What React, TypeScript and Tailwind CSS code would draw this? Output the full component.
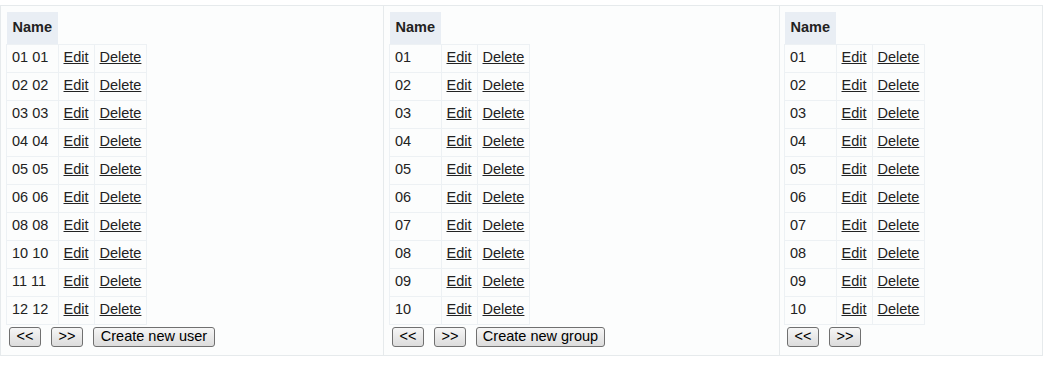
const users = ["01 01", "02 02", "03 03", "04 04", "05 05", "06 06", "08 08", "10 10", "11 11", "12 12"];
const groups = ["01", "02", "03", "04", "05", "06", "07", "08", "09", "10"];

const Btn = ({ label, w }: { label: string; w: string }) => (
  <button
    className={`${w} h-[20px] rounded-[3px] border border-[#707070] bg-gradient-to-b from-[#f6f6f6] to-[#dcdcdc] text-[14.5px] leading-none text-black`}
  >
    {label}
  </button>
);

const Listing = ({
  rows,
  create,
  createW,
}: {
  rows: string[];
  create?: string;
  createW?: string;
}) => (
  <div className="flex flex-col items-start">
    <table className="border-collapse">
      <thead>
        <tr>
          <th className="h-[32px] bg-[#e9eef4] px-[6px] text-left font-bold">Name</th>
        </tr>
      </thead>
      <tbody>
        {rows.map((r) => (
          <tr key={r} className="h-[28px]">
            <td className="border border-[#edf1f4] px-[5px]">{r}</td>
            <td className="border border-[#edf1f4] px-[5px]">
              <a className="underline">Edit</a>
            </td>
            <td className="border border-[#edf1f4] px-[5px]">
              <a className="underline">Delete</a>
            </td>
          </tr>
        ))}
      </tbody>
    </table>
    <div className="mt-[2px] ml-[3px] flex gap-[10px]">
      <Btn label="<<" w="w-[32px]" />
      <Btn label=">>" w="w-[32px]" />
      {create && <Btn label={create} w={createW ?? ""} />}
    </div>
  </div>
);

export default function App() {
  return (
    <div
      className="h-[370px] w-[1054px] bg-white pt-[5px] text-[14.5px] text-[#222]"
      style={{ fontFamily: '"Liberation Sans", Arial, sans-serif' }}
    >
      <div className="flex h-[351px] w-[1043px] border border-[#e6eaec] bg-[#fcfdfd]">
        <div className="w-[383px] border-r border-[#e6eaec] pl-[5px] pt-[6px]">
          <Listing rows={users} create="Create new user" createW="w-[122px]" />
        </div>
        <div className="w-[396px] border-r border-[#e6eaec] pl-[5px] pt-[6px]">
          <Listing rows={groups} create="Create new group" createW="w-[129px]" />
        </div>
        <div className="flex-1 pl-[4px] pt-[6px]">
          <Listing rows={groups} />
        </div>
      </div>
    </div>
  );
}
